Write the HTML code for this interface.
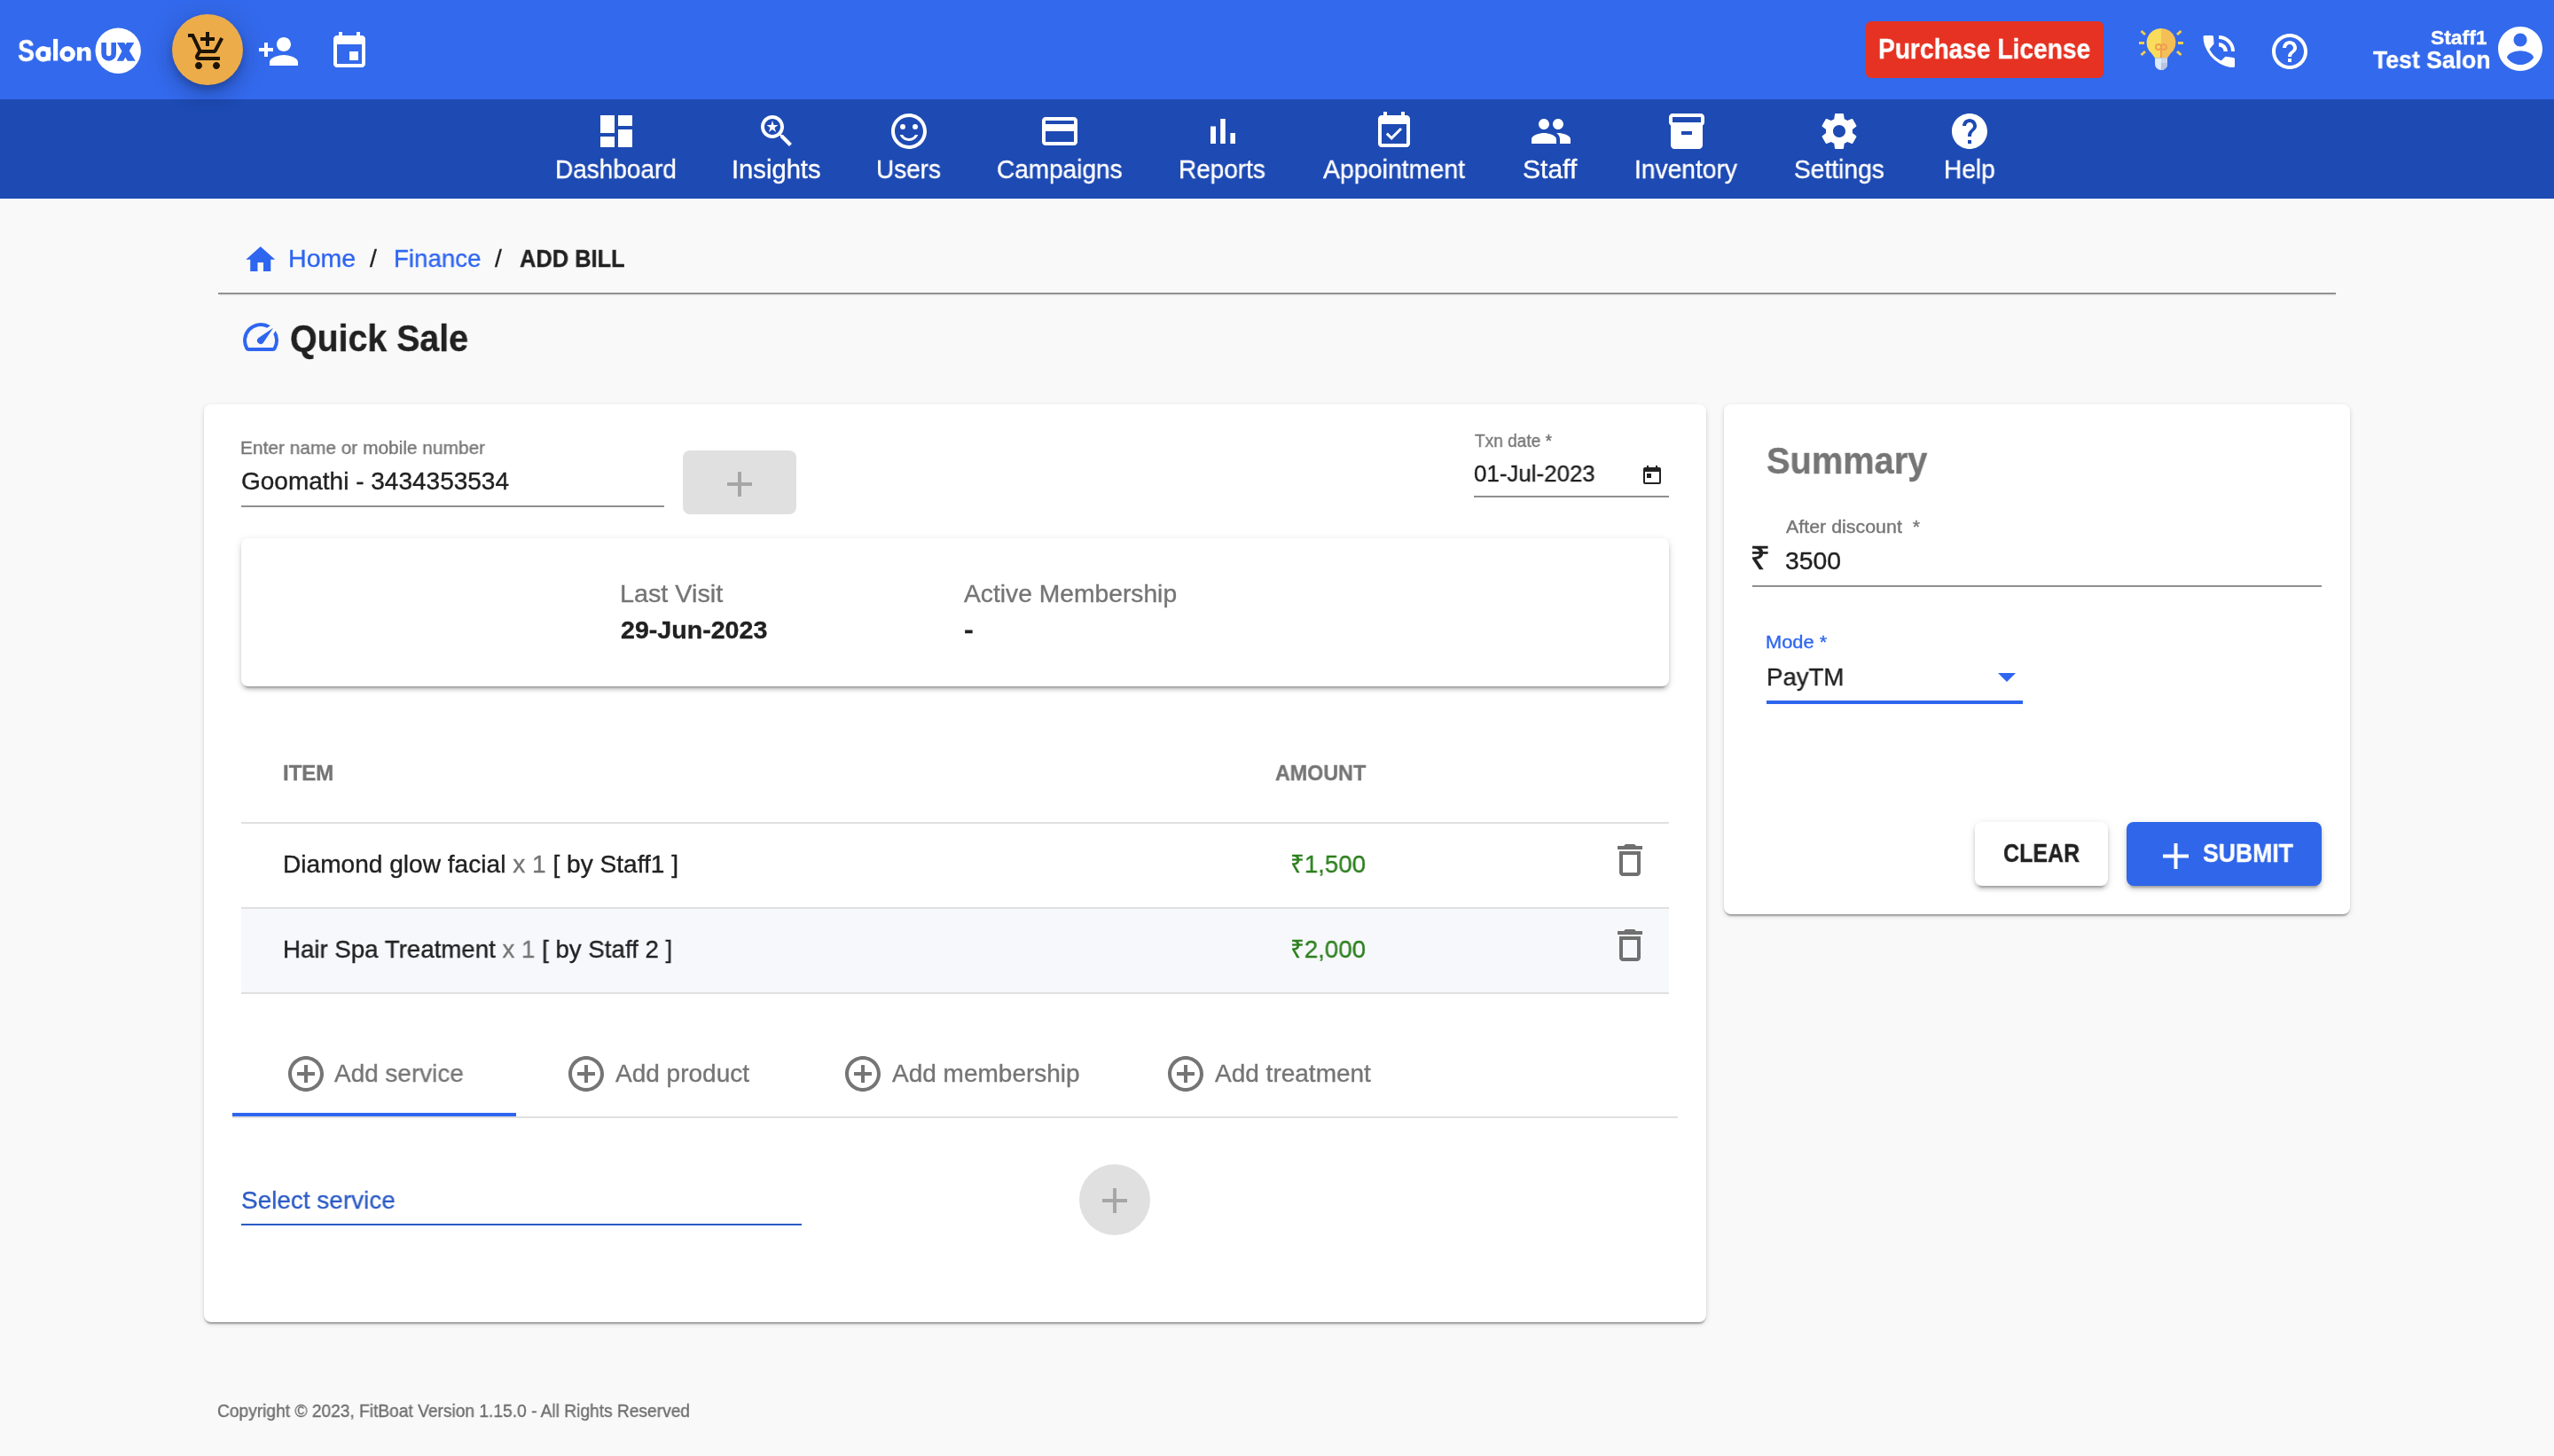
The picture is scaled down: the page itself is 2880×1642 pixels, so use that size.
<!DOCTYPE html>
<html><head><meta charset="utf-8"><title>Quick Sale</title>
<style>
html,body{margin:0;padding:0;}
body{width:2880px;height:1642px;position:relative;overflow:hidden;background:#f9f9f9;font-family:"Liberation Sans", sans-serif;}
body div{line-height:1;white-space:pre;}
body > div.t{will-change:transform;-webkit-text-stroke:0.35px currentColor;}
</style></head><body>
<div style="position:absolute;left:0px;top:0px;width:2880px;height:112px;background:#3369ec"></div>
<div style="position:absolute;left:0px;top:112px;width:2880px;height:112px;background:#1e4ab3"></div>
<svg style="position:absolute;left:0;top:0" width="170" height="100" viewBox="0 0 170 100">
<g fill="#fff">
<circle cx="48.8" cy="60.9" r="6.1" fill="none" stroke="#fff" stroke-width="5.4"/>
<rect x="51.7" y="53.3" width="5.3" height="15.2"/>
<rect x="60.1" y="43.9" width="5.1" height="24.6"/>
<circle cx="76.1" cy="60.9" r="6.1" fill="none" stroke="#fff" stroke-width="5.4"/>
<path d="M86.9 68.5V53.3h5.3v2.2c1.3-1.6 3.2-2.5 5.2-2.5 3.4 0 5.1 2.3 5.1 6.2v9.3h-5.3v-8.3c0-1.9-.8-2.9-2.4-2.9-1.7 0-2.6 1.1-2.6 3.1v8.1z"/>
<circle cx="133.2" cy="57.2" r="25.7"/>
</g>
<g fill="#3369ec">
<path d="M114.3 47.9H119.9V60.45A2.75 2.75 0 0 0 125.4 60.45V47.9H131V60.45A8.35 8.35 0 0 1 114.3 60.45Z"/>
<path d="M131.9 47.9H140.1L152.7 68.8H143.8Z"/>
<path d="M143 47.9H151.3L139 68.8H131.6Z"/>
</g>
</svg>
<div style="position:absolute;left:194px;top:16px;width:80px;height:80px;border-radius:50%;background:#edac4a;box-shadow:0 6px 10px -2px rgba(0,0,0,0.2),0 12px 20px 0 rgba(0,0,0,0.14),0 2px 36px 0 rgba(0,0,0,0.12)"></div>
<svg style="position:absolute;left:210px;top:34px;" width="48" height="48" viewBox="0 0 24 24"><path fill="#1d1405" fill-rule="nonzero" d="M11 9h2V6h3V4h-3V1h-2v3H8v2h3v3zm-4 9c-1.1 0-1.99.9-1.99 2S5.9 22 7 22s2-.9 2-2-.9-2-2-2zm10 0c-1.1 0-1.99.9-1.99 2s.89 2 1.99 2 2-.9 2-2-.9-2-2-2zm-8.9-5h7.45c.75 0 1.41-.41 1.75-1.03L21 4.96 19.25 4l-3.7 7H8.53L4.27 2H1v2h2l3.6 7.59-1.35 2.44C4.52 15.37 5.48 17 7 17h12v-2H7l1.1-2z"/></svg>
<svg style="position:absolute;left:290px;top:34px;" width="48" height="48" viewBox="0 0 24 24"><path fill="#ffffff" fill-rule="nonzero" d="M15 12c2.21 0 4-1.79 4-4s-1.79-4-4-4-4 1.79-4 4 1.79 4 4 4zm-9-2V7H4v3H1v2h3v3h2v-3h3v-2H6zm9 4c-2.67 0-8 1.34-8 4v2h16v-2c0-2.66-5.33-4-8-4z"/></svg>
<svg style="position:absolute;left:370px;top:34px;" width="48" height="48" viewBox="0 0 24 24"><path fill="#ffffff" fill-rule="nonzero" d="M17 12h-5v5h5v-5zM16 1v2H8V1H6v2H5c-1.11 0-1.99.9-1.99 2L3 19c0 1.1.89 2 2 2h14c1.1 0 2-.9 2-2V5c0-1.1-.9-2-2-2h-1V1h-2zm3 18H5V8h14v11z"/></svg>
<div style="position:absolute;left:2104px;top:24px;width:268px;height:64px;background:#e63222;border-radius:6px"></div>
<svg style="position:absolute;left:2410px;top:30px" width="54" height="52" viewBox="0 0 54 52">
<g stroke="#f6cf4e" stroke-width="3">
<line x1="2" y1="18.5" x2="8" y2="18.5"/><line x1="46" y1="18.5" x2="52" y2="18.5"/>
<line x1="4.5" y1="5" x2="9" y2="9"/><line x1="49.5" y1="5" x2="45" y2="9"/>
<line x1="4.5" y1="32" x2="9" y2="28"/><line x1="49.5" y1="32" x2="45" y2="28"/>
</g>
<path d="M27 2 A16 16 0 0 0 16.5 30.5 L20 35.5 L27 35.5 Z" fill="#f9dc5c"/>
<path d="M27 2 A16 16 0 0 1 37.5 30.5 L34 35.5 L27 35.5 Z" fill="#f5bf58"/>
<path d="M20 35.5 H34 V42 A7 7 0 0 1 20 42 Z" fill="#dce9fb"/>
<path d="M27 35.5 H34 V42 A7 7 0 0 1 27 49 Z" fill="#c9d8f1"/>
<path d="M27 41 H34 V42 A7 7 0 0 1 27 49 Z" fill="#b9c5de"/>
<g fill="none" stroke="#ef9f4f" stroke-width="2"><circle cx="24" cy="23" r="3"/><circle cx="30" cy="23" r="3"/><line x1="27" y1="23" x2="27" y2="35"/></g>
</svg>
<svg style="position:absolute;left:2484px;top:40px" width="36" height="36" viewBox="0 0 36 36">
<path fill="#fff" d="M0.5 1.5 Q0.5 0 2 0 L10.5 0 Q12 0 12 1.5 L12.5 9.5 L7.5 15.5 Q12 24 20.5 28.5 L25.5 23.8 L34.5 25 Q36 25.3 36 26.8 L36 34.5 Q36 36 34.5 36 Q26 36 18 31 Q7 24.5 2 11 Q0.5 6 0.5 1.5 Z"/>
<path fill="#fff" d="M18 0 A18 18 0 0 1 36 18 L32 18 A14 14 0 0 0 18 4 Z"/>
<path fill="#fff" d="M18 8 A10 10 0 0 1 28 18 L23.5 18 A5.5 5.5 0 0 0 18 12.5 Z"/>
</svg>
<svg style="position:absolute;left:2558px;top:34px;" width="48" height="48" viewBox="0 0 24 24"><path fill="#ffffff" fill-rule="nonzero" d="M11 18h2v-2h-2v2zm1-16C6.48 2 2 6.48 2 12s4.48 10 10 10 10-4.48 10-10S17.52 2 12 2zm0 18c-4.41 0-8-3.59-8-8s3.59-8 8-8 8 3.59 8 8-3.59 8-8 8zm0-14c-2.21 0-4 1.79-4 4h2c0-1.1.9-2 2-2s2 .9 2 2c0 2-3 1.75-3 5h2c0-2.25 3-2.5 3-5 0-2.21-1.79-4-4-4z"/></svg>
<svg style="position:absolute;left:2812px;top:25px;" width="60" height="60" viewBox="0 0 24 24"><path fill="#ffffff" fill-rule="evenodd" d="M12 2C6.48 2 2 6.48 2 12s4.48 10 10 10 10-4.48 10-10S17.52 2 12 2zm0 3c1.66 0 3 1.34 3 3s-1.34 3-3 3-3-1.34-3-3 1.34-3 3-3zm0 14.2c-2.5 0-4.71-1.28-6-3.22.03-1.99 4-3.08 6-3.08 1.99 0 5.970 1.09 6 3.08-1.29 1.94-3.5 3.22-6 3.22z"/></svg>
<svg style="position:absolute;left:670.5px;top:124px;" width="48" height="48" viewBox="0 0 24 24"><path fill="#ffffff" fill-rule="nonzero" d="M3 13h8V3H3v10zm0 8h8v-6H3v6zm10 0h8V11h-8v10zm0-18v6h8V3h-8z"/></svg>
<svg style="position:absolute;left:852px;top:124px;" width="48" height="48" viewBox="0 0 24 24"><path fill="#ffffff" fill-rule="nonzero" d="M15.5 14h-.79l-.28-.27C15.41 12.59 16 11.11 16 9.5 16 5.91 13.09 3 9.5 3S3 5.91 3 9.5 5.91 16 9.5 16c1.61 0 3.09-.59 4.23-1.57l.27.28v.79l5 4.99L20.49 19l-4.990-5zm-6 0C7.01 14 5 11.99 5 9.5S7.01 5 9.5 5 14 7.01 14 9.5 11.99 14 9.5 14zM10.29 8.44L9.5 6 8.71 8.44H6.25l2.01 1.59-.77 2.47 2.01-1.53 2.01 1.53-.77-2.47 2.01-1.59z"/></svg>
<svg style="position:absolute;left:1001px;top:124px;" width="48" height="48" viewBox="0 0 24 24"><path fill="#ffffff" fill-rule="nonzero" d="M15.5 8a1.5 1.5 0 1 0 0 3 1.5 1.5 0 1 0 0-3zM8.5 8a1.5 1.5 0 1 0 0 3 1.5 1.5 0 1 0 0-3zM12 16c-1.48 0-2.75-.81-3.45-2H6.88c.8 2.05 2.79 3.5 5.12 3.5s4.32-1.45 5.12-3.5h-1.67c-.7 1.19-1.97 2-3.45 2zm-.01-14C6.47 2 2 6.48 2 12s4.47 10 9.99 10C17.52 22 22 17.52 22 12S17.52 2 11.99 2zM12 20c-4.42 0-8-3.58-8-8s3.58-8 8-8 8 3.58 8 8-3.58 8-8 8z"/></svg>
<svg style="position:absolute;left:1171.2px;top:124px;" width="48" height="48" viewBox="0 0 24 24"><path fill="#ffffff" fill-rule="nonzero" d="M20 4H4c-1.11 0-1.99.89-1.99 2L2 18c0 1.11.89 2 2 2h16c1.11 0 2-.89 2-2V6c0-1.11-.89-2-2-2zm0 14H4v-6h16v6zm0-10H4V6h16v2z"/></svg>
<svg style="position:absolute;left:1355px;top:124px;" width="48" height="48" viewBox="0 0 24 24"><path fill="#ffffff" fill-rule="nonzero" d="M5 9.2h3V19H5zM10.6 5h2.8v14h-2.8zm5.6 8H19v6h-2.8z"/></svg>
<svg style="position:absolute;left:1548px;top:124px;" width="48" height="48" viewBox="0 0 24 24"><path fill="#ffffff" fill-rule="nonzero" d="M16.53 11.06L15.47 10l-4.88 4.88-2.12-2.12-1.06 1.06L10.59 17l5.94-5.94zM19 3h-1V1h-2v2H8V1H6v2H5c-1.11 0-1.99.9-1.99 2L3 19c0 1.1.89 2 2 2h14c1.1 0 2-.9 2-2V5c0-1.1-.9-2-2-2zm0 16H5V8h14v11z"/></svg>
<svg style="position:absolute;left:1724.5px;top:124px;" width="48" height="48" viewBox="0 0 24 24"><path fill="#ffffff" fill-rule="nonzero" d="M16 11c1.66 0 2.99-1.34 2.99-3S17.66 5 16 5c-1.66 0-3 1.34-3 3s1.34 3 3 3zm-8 0c1.66 0 2.99-1.34 2.99-3S9.66 5 8 5C6.34 5 5 6.34 5 8s1.34 3 3 3zm0 2c-2.33 0-7 1.17-7 3.5V19h14v-2.5c0-2.33-4.67-3.5-7-3.5zm8 0c-.29 0-.62.02-.97.05 1.16.84 1.97 1.970 1.97 3.45V19h6v-2.5c0-2.33-4.67-3.5-7-3.5z"/></svg>
<svg style="position:absolute;left:1878px;top:124px;" width="48" height="48" viewBox="0 0 24 24"><path fill="#ffffff" fill-rule="nonzero" d="M20 2H4c-1 0-2 .9-2 2v3.01c0 .72.43 1.34 1 1.69V20c0 1.1 1.1 2 2 2h14c.9 0 2-.9 2-2V8.7c.57-.35 1-.97 1-1.69V4c0-1.1-1-2-2-2zm-5 12H9v-2h6v2zm5-7H4V4l16-.02V7z"/></svg>
<svg style="position:absolute;left:2050px;top:124px;" width="48" height="48" viewBox="0 0 24 24"><path fill="#ffffff" fill-rule="nonzero" d="M19.43 12.98c.04-.32.07-.64.07-.98s-.03-.66-.07-.98l2.11-1.65c.19-.15.24-.42.12-.64l-2-3.46c-.12-.22-.39-.3-.61-.22l-2.49 1c-.52-.4-1.08-.73-1.69-.98l-.38-2.650C14.46 2.18 14.25 2 14 2h-4c-.25 0-.46.18-.49.42l-.38 2.65c-.61.25-1.17.59-1.69.98l-2.49-1c-.23-.09-.49 0-.61.22l-2 3.46c-.13.22-.07.49.12.64l2.11 1.65c-.04.32-.07.65-.07.98s.03.66.07.98l-2.11 1.65c-.19.15-.24.42-.12.64l2 3.46c.12.22.39.3.61.22l2.49-1c.52.4 1.08.73 1.69.98l.38 2.65c.03.24.24.42.49.42h4c.25 0 .46-.18.49-.42l.38-2.65c.61-.25 1.17-.59 1.69-.98l2.49 1c.23.09.49 0 .61-.22l2-3.46c.12-.22.07-.49-.12-.64l-2.11-1.65zM12 15.5c-1.93 0-3.5-1.57-3.5-3.5s1.57-3.5 3.5-3.5 3.5 1.57 3.5 3.5-1.57 3.5-3.5 3.5z"/></svg>
<svg style="position:absolute;left:2197px;top:124px;" width="48" height="48" viewBox="0 0 24 24"><path fill="#ffffff" fill-rule="nonzero" d="M12 2C6.48 2 2 6.48 2 12s4.48 10 10 10 10-4.48 10-10S17.52 2 12 2zm1 17h-2v-2h2v2zm2.07-7.75l-.9.92C13.45 12.9 13 13.5 13 15h-2v-.5c0-1.1.45-2.1 1.17-2.83l1.24-1.26c.37-.36.59-.86.59-1.41 0-1.1-.9-2-2-2s-2 .9-2 2H8c0-2.21 1.79-4 4-4s4 1.79 4 4c0 .88-.36 1.68-.93 2.25z"/></svg>
<svg style="position:absolute;left:273.8px;top:273px;" width="39.5" height="39.5" viewBox="0 0 24 24"><path fill="#2f66f0" fill-rule="nonzero" d="M10 20v-6h4v6h5v-8h3L12 3 2 12h3v8z"/></svg>
<div style="position:absolute;left:246px;top:330px;width:2388px;height:2px;background:#919191"></div>
<div style="position:absolute;left:248px;top:332px;width:2386px;height:2px;background:#efefef"></div>
<svg style="position:absolute;left:269.7px;top:356px;" width="48" height="48" viewBox="0 0 24 24"><path fill="#2f66f0" fill-rule="nonzero" d="M20.38 8.57l-1.23 1.85a8 8 0 0 1-.22 7.58H5.07A8 8 0 0 1 15.58 6.85l1.85-1.23A10 10 0 0 0 3.35 19a2 2 0 0 0 1.72 1h13.85a2 2 0 0 0 1.74-1 10 10 0 0 0-.27-10.44zm-9.79 6.84a2 2 0 0 0 2.83 0l5.66-8.49-8.49 5.66a2 2 0 0 0 0 2.83z"/></svg>
<div style="position:absolute;left:230px;top:456px;width:1694px;height:1035px;background:#fff;border-radius:8px;box-shadow:0 4px 2px -2px rgba(0,0,0,0.2),0 2px 2px 0 rgba(0,0,0,0.14),0 2px 6px 0 rgba(0,0,0,0.12)"></div>
<div style="position:absolute;left:272px;top:570px;width:477px;height:2px;background:#8f8f8f"></div>
<div style="position:absolute;left:770px;top:508px;width:128px;height:72px;background:#e0e0e0;border-radius:8px"></div>
<svg style="position:absolute;left:809.5px;top:522px;" width="48" height="48" viewBox="0 0 24 24"><path fill="#a6a6a6" fill-rule="nonzero" d="M19 13h-6v6h-2v-6H5v-2h6V5h2v6h6v2z"/></svg>
<svg style="position:absolute;left:1853px;top:525px" width="20" height="21" viewBox="0 0 20 21">
<path fill="#222" d="M4 0h2v2h8V0h2v2h2a2 2 0 0 1 2 2v15a2 2 0 0 1-2 2H2a2 2 0 0 1-2-2V4a2 2 0 0 1 2-2h2z M2 7v12h16V7z M4 9h5v5H4z"/>
</svg>
<div style="position:absolute;left:1662px;top:559px;width:220px;height:2px;background:#8f8f8f"></div>
<div style="position:absolute;left:272px;top:607px;width:1610px;height:167px;background:#fff;border-radius:8px;box-shadow:0 6px 2px -4px rgba(0,0,0,0.2),0 4px 4px 0 rgba(0,0,0,0.14),0 2px 10px 0 rgba(0,0,0,0.12)"></div>
<div style="position:absolute;left:272px;top:927px;width:1610px;height:2px;background:#e0e0e0"></div>
<div style="position:absolute;left:272px;top:1025px;width:1610px;height:94px;background:#f7f8fc"></div>
<div style="position:absolute;left:272px;top:1023px;width:1610px;height:2px;background:#e0e0e0"></div>
<div style="position:absolute;left:272px;top:1119px;width:1610px;height:2px;background:#e0e0e0"></div>
<svg style="position:absolute;left:1814px;top:946px;" width="48" height="48" viewBox="0 0 24 24"><path fill="#707070" fill-rule="nonzero" d="M6 19c0 1.1.9 2 2 2h8c1.1 0 2-.9 2-2V7H6v12zM8 9h8v10H8V9zm7.5-5l-1-1h-5l-1 1H5v2h14V4z"/></svg>
<svg style="position:absolute;left:1814px;top:1042px;" width="48" height="48" viewBox="0 0 24 24"><path fill="#707070" fill-rule="nonzero" d="M6 19c0 1.1.9 2 2 2h8c1.1 0 2-.9 2-2V7H6v12zM8 9h8v10H8V9zm7.5-5l-1-1h-5l-1 1H5v2h14V4z"/></svg>
<div style="position:absolute;left:262px;top:1259px;width:1630px;height:2px;background:#e0e0e0"></div>
<div style="position:absolute;left:262px;top:1255px;width:320px;height:4px;background:#2f66f0"></div>
<svg style="position:absolute;left:320.70000000000005px;top:1186.7px;" width="48" height="48" viewBox="0 0 24 24"><path fill="#757575" fill-rule="nonzero" d="M13 7h-2v4H7v2h4v4h2v-4h4v-2h-4V7zm-1-5C6.48 2 2 6.48 2 12s4.48 10 10 10 10-4.48 10-10S17.52 2 12 2zm0 18c-4.41 0-8-3.59-8-8s3.590-8 8-8 8 3.59 8 8-3.59 8-8 8z"/></svg>
<svg style="position:absolute;left:637.1px;top:1186.7px;" width="48" height="48" viewBox="0 0 24 24"><path fill="#757575" fill-rule="nonzero" d="M13 7h-2v4H7v2h4v4h2v-4h4v-2h-4V7zm-1-5C6.48 2 2 6.48 2 12s4.48 10 10 10 10-4.48 10-10S17.52 2 12 2zm0 18c-4.41 0-8-3.59-8-8s3.590-8 8-8 8 3.59 8 8-3.59 8-8 8z"/></svg>
<svg style="position:absolute;left:948.7px;top:1186.7px;" width="48" height="48" viewBox="0 0 24 24"><path fill="#757575" fill-rule="nonzero" d="M13 7h-2v4H7v2h4v4h2v-4h4v-2h-4V7zm-1-5C6.48 2 2 6.48 2 12s4.48 10 10 10 10-4.48 10-10S17.52 2 12 2zm0 18c-4.41 0-8-3.59-8-8s3.590-8 8-8 8 3.59 8 8-3.59 8-8 8z"/></svg>
<svg style="position:absolute;left:1312.8999999999999px;top:1186.7px;" width="48" height="48" viewBox="0 0 24 24"><path fill="#757575" fill-rule="nonzero" d="M13 7h-2v4H7v2h4v4h2v-4h4v-2h-4V7zm-1-5C6.48 2 2 6.48 2 12s4.48 10 10 10 10-4.48 10-10S17.52 2 12 2zm0 18c-4.41 0-8-3.59-8-8s3.590-8 8-8 8 3.59 8 8-3.59 8-8 8z"/></svg>
<div style="position:absolute;left:272px;top:1379.5px;width:632px;height:2.0px;background:#2c5cc5"></div>
<div style="position:absolute;left:1217px;top:1313px;width:80px;height:80px;border-radius:50%;background:#e0e0e0"></div>
<svg style="position:absolute;left:1233px;top:1329.5px;" width="48" height="48" viewBox="0 0 24 24"><path fill="#a6a6a6" fill-rule="nonzero" d="M19 13h-6v6h-2v-6H5v-2h6V5h2v6h6v2z"/></svg>
<div style="position:absolute;left:1944px;top:456px;width:706px;height:575px;background:#fff;border-radius:8px;box-shadow:0 4px 2px -2px rgba(0,0,0,0.2),0 2px 2px 0 rgba(0,0,0,0.14),0 2px 6px 0 rgba(0,0,0,0.12)"></div>
<div style="position:absolute;left:1976px;top:660px;width:642px;height:2px;background:#8f8f8f"></div>
<svg style="position:absolute;left:2239px;top:739px;" width="48" height="48" viewBox="0 0 24 24"><path fill="#2f66f0" fill-rule="nonzero" d="M7 10l5 5 5-5z"/></svg>
<div style="position:absolute;left:1992px;top:790px;width:289px;height:4px;background:#2f66f0"></div>
<div style="position:absolute;left:2227px;top:927px;width:150px;height:72px;background:#fff;border-radius:8px;box-shadow:0 6px 2px -4px rgba(0,0,0,0.2),0 4px 4px 0 rgba(0,0,0,0.14),0 2px 10px 0 rgba(0,0,0,0.12)"></div>
<div style="position:absolute;left:2398px;top:927px;width:220px;height:72px;background:#2f66ea;border-radius:8px;box-shadow:0 6px 2px -4px rgba(0,0,0,0.2),0 4px 4px 0 rgba(0,0,0,0.14),0 2px 10px 0 rgba(0,0,0,0.12)"></div>
<svg style="position:absolute;left:2439px;top:951px" width="29" height="29" viewBox="0 0 29 29"><path fill="#fff" d="M12.5 0h4v12.5H29v4H16.5V29h-4V16.5H0v-4h12.5z"/></svg>
<div class="t" style="position:absolute;left:20.36px;top:40.07px;font-size:34px;font-weight:700;color:#ffffff;transform:scale(0.8381,1.0300);transform-origin:0 28.73px;">S</div>
<div class="t" style="position:absolute;left:2118.49px;top:40.01px;font-size:31px;font-weight:700;color:#ffffff;transform:scale(0.9069,1.0000);transform-origin:0 26.20px;">Purchase License</div>
<div class="t" style="position:absolute;left:2741.39px;top:31.59px;font-size:22.5px;font-weight:700;color:#ffffff;transform:scale(1.0148,1.0000);transform-origin:0 19.01px;">Staff1</div>
<div class="t" style="position:absolute;left:2676.00px;top:54.24px;font-size:28px;font-weight:700;color:#ffffff;transform:scale(0.9493,1.0000);transform-origin:0 23.66px;">Test Salon</div>
<div class="t" style="position:absolute;left:626.27px;top:176.50px;font-size:29px;font-weight:400;color:#ffffff;transform:scale(0.9645,1.0000);transform-origin:0 24.50px;">Dashboard</div>
<div class="t" style="position:absolute;left:824.58px;top:176.50px;font-size:29px;font-weight:400;color:#ffffff;transform:scale(1.0063,1.0000);transform-origin:0 24.50px;">Insights</div>
<div class="t" style="position:absolute;left:988.07px;top:176.50px;font-size:29px;font-weight:400;color:#ffffff;transform:scale(0.9630,1.0000);transform-origin:0 24.50px;">Users</div>
<div class="t" style="position:absolute;left:1124.34px;top:176.50px;font-size:29px;font-weight:400;color:#ffffff;transform:scale(0.9648,1.0000);transform-origin:0 24.50px;">Campaigns</div>
<div class="t" style="position:absolute;left:1329.07px;top:176.50px;font-size:29px;font-weight:400;color:#ffffff;transform:scale(0.9636,1.0000);transform-origin:0 24.50px;">Reports</div>
<div class="t" style="position:absolute;left:1491.70px;top:176.50px;font-size:29px;font-weight:400;color:#ffffff;transform:scale(0.9828,1.0000);transform-origin:0 24.50px;">Appointment</div>
<div class="t" style="position:absolute;left:1717.36px;top:176.50px;font-size:29px;font-weight:400;color:#ffffff;transform:scale(1.0362,1.0000);transform-origin:0 24.50px;">Staff</div>
<div class="t" style="position:absolute;left:1843.09px;top:176.50px;font-size:29px;font-weight:400;color:#ffffff;transform:scale(0.9716,1.0000);transform-origin:0 24.50px;">Inventory</div>
<div class="t" style="position:absolute;left:2022.93px;top:176.50px;font-size:29px;font-weight:400;color:#ffffff;transform:scale(0.9718,1.0000);transform-origin:0 24.50px;">Settings</div>
<div class="t" style="position:absolute;left:2191.86px;top:176.50px;font-size:29px;font-weight:400;color:#ffffff;transform:scale(0.9684,1.0000);transform-origin:0 24.50px;">Help</div>
<div class="t" style="position:absolute;left:324.96px;top:278.34px;font-size:28px;font-weight:400;color:#2f66f0;transform:scale(1.0208,1.0000);transform-origin:0 23.66px;">Home</div>
<div class="t" style="position:absolute;left:417.00px;top:278.34px;font-size:28px;font-weight:400;color:#212121;">/</div>
<div class="t" style="position:absolute;left:443.62px;top:278.34px;font-size:28px;font-weight:400;color:#2f66f0;transform:scale(0.9887,1.0000);transform-origin:0 23.66px;">Finance</div>
<div class="t" style="position:absolute;left:558.00px;top:278.34px;font-size:28px;font-weight:400;color:#212121;">/</div>
<div class="t" style="position:absolute;left:585.59px;top:278.34px;font-size:28px;font-weight:700;color:#212121;transform:scale(0.9078,1.0000);transform-origin:0 23.66px;">ADD BILL</div>
<div class="t" style="position:absolute;left:327.17px;top:359.67px;font-size:43px;font-weight:700;color:#212121;transform:scale(0.9143,1.0000);transform-origin:0 36.34px;">Quick Sale</div>
<div class="t" style="position:absolute;left:271.01px;top:493.56px;font-size:21px;font-weight:400;color:#757575;transform:scale(0.9938,1.0000);transform-origin:0 17.75px;">Enter name or mobile number</div>
<div class="t" style="position:absolute;left:271.50px;top:529.34px;font-size:28px;font-weight:400;color:#212121;">Goomathi - 3434353534</div>
<div class="t" style="position:absolute;left:1662.60px;top:486.70px;font-size:20px;font-weight:400;color:#757575;transform:scale(0.9538,1.0000);transform-origin:0 16.90px;">Txn date *</div>
<div class="t" style="position:absolute;left:1662.40px;top:521.03px;font-size:26px;font-weight:400;color:#212121;transform:scale(0.9956,1.0000);transform-origin:0 21.97px;">01-Jul-2023</div>
<div class="t" style="position:absolute;left:699.25px;top:655.74px;font-size:28px;font-weight:400;color:#757575;transform:scale(1.0270,1.0000);transform-origin:0 23.66px;">Last Visit</div>
<div class="t" style="position:absolute;left:699.78px;top:697.04px;font-size:28px;font-weight:700;color:#212121;transform:scale(1.0213,1.0000);transform-origin:0 23.66px;">29-Jun-2023</div>
<div class="t" style="position:absolute;left:1087.40px;top:655.74px;font-size:28px;font-weight:400;color:#757575;transform:scale(1.0084,1.0000);transform-origin:0 23.66px;">Active Membership</div>
<div class="t" style="position:absolute;left:1086.86px;top:697.04px;font-size:28px;font-weight:700;color:#212121;transform:scale(1.1429,1.0000);transform-origin:0 23.66px;">-</div>
<div class="t" style="position:absolute;left:318.61px;top:859.72px;font-size:24px;font-weight:700;color:#757575;transform:scale(0.9963,1.0000);transform-origin:0 20.28px;">ITEM</div>
<div class="t" style="position:absolute;left:1437.93px;top:859.72px;font-size:24px;font-weight:700;color:#757575;transform:scale(0.9702,1.0000);transform-origin:0 20.28px;">AMOUNT</div>
<div class="t" style="position:absolute;left:318.59px;top:961.34px;font-size:28px;font-weight:400;color:#212121;transform:scale(1.0032,1.0000);transform-origin:0 23.66px;">Diamond glow facial <span style="color:#757575">x 1</span> [ by Staff1 ]</div>
<div class="t" style="position:absolute;left:318.62px;top:1057.34px;font-size:28px;font-weight:400;color:#212121;transform:scale(0.9878,1.0000);transform-origin:0 23.66px;">Hair Spa Treatment <span style="color:#757575">x 1</span> [ by Staff 2 ]</div>
<div class="t" style="position:absolute;left:1454.92px;top:961.34px;font-size:28px;font-weight:400;color:#2b7f1c;transform:scale(0.9880,1.0000);transform-origin:0 23.66px;">₹1,500</div>
<div class="t" style="position:absolute;left:1454.92px;top:1057.34px;font-size:28px;font-weight:400;color:#2b7f1c;transform:scale(0.9880,1.0000);transform-origin:0 23.66px;">₹2,000</div>
<div class="t" style="position:absolute;left:377.30px;top:1196.84px;font-size:28px;font-weight:400;color:#757575;transform:scale(0.9966,1.0000);transform-origin:0 23.66px;">Add service</div>
<div class="t" style="position:absolute;left:694.00px;top:1196.84px;font-size:28px;font-weight:400;color:#757575;">Add product</div>
<div class="t" style="position:absolute;left:1005.70px;top:1196.84px;font-size:28px;font-weight:400;color:#757575;">Add membership</div>
<div class="t" style="position:absolute;left:1369.80px;top:1196.84px;font-size:28px;font-weight:400;color:#757575;">Add treatment</div>
<div class="t" style="position:absolute;left:271.50px;top:1339.74px;font-size:28px;font-weight:400;color:#2c5cc5;transform:scale(0.9971,1.0000);transform-origin:0 23.66px;">Select service</div>
<div class="t" style="position:absolute;left:1992.25px;top:499.01px;font-size:42px;font-weight:700;color:#757575;transform:scale(0.9479,1.0000);transform-origin:0 35.49px;">Summary</div>
<div class="t" style="position:absolute;left:2013.60px;top:583.25px;font-size:21px;font-weight:400;color:#757575;transform:scale(1.0189,1.0000);transform-origin:0 17.75px;">After discount  *</div>
<div class="t" style="position:absolute;left:1973.47px;top:619.34px;font-size:28px;font-weight:400;color:#212121;transform:scale(1.4667,1.3000);transform-origin:0 23.66px;">₹</div>
<div class="t" style="position:absolute;left:2012.59px;top:619.34px;font-size:28px;font-weight:400;color:#212121;transform:scale(1.0117,1.0000);transform-origin:0 23.66px;">3500</div>
<div class="t" style="position:absolute;left:1990.72px;top:713.46px;font-size:21px;font-weight:400;color:#2f66f0;transform:scale(1.0406,1.0000);transform-origin:0 17.75px;">Mode *</div>
<div class="t" style="position:absolute;left:1991.53px;top:749.54px;font-size:28px;font-weight:400;color:#212121;transform:scale(0.9859,1.0000);transform-origin:0 23.66px;">PayTM</div>
<div class="t" style="position:absolute;left:2259.34px;top:947.79px;font-size:29px;font-weight:700;color:#212121;transform:scale(0.8622,1.0000);transform-origin:0 24.50px;">CLEAR</div>
<div class="t" style="position:absolute;left:2484.08px;top:947.79px;font-size:29px;font-weight:700;color:#ffffff;transform:scale(0.9164,1.0000);transform-origin:0 24.50px;">SUBMIT</div>
<div class="t" style="position:absolute;left:245.04px;top:1580.90px;font-size:20px;font-weight:400;color:#6e6e6e;transform:scale(0.9583,1.0000);transform-origin:0 16.90px;">Copyright © 2023, FitBoat Version 1.15.0 - All Rights Reserved</div>
</body></html>
